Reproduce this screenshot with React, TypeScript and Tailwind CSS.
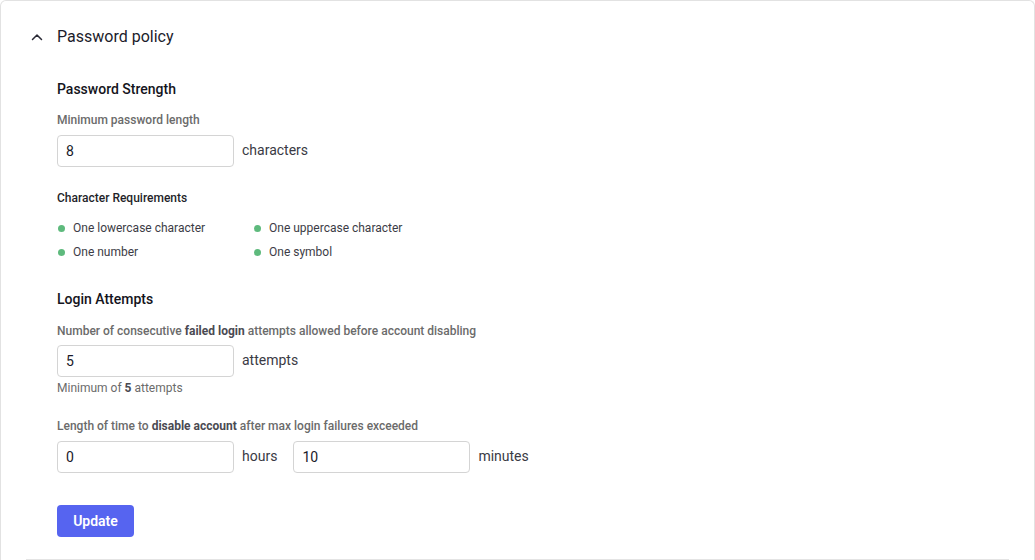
import React from 'react';

const reqs = [
  'One lowercase character',
  'One uppercase character',
  'One number',
  'One symbol',
];

function NumberInput({ value }: { value: string }) {
  return (
    <input
      type="text"
      defaultValue={value}
      className="w-[177px] h-[32px] rounded-[4px] border border-[#d4d4d4] bg-white px-[8px] pb-[1px] text-[14px] text-[#1a1a2a] outline-none"
    />
  );
}

export default function App() {
  return (
    <div className="min-h-[560px] w-[1035px] bg-white font-['Roboto',sans-serif]">
      <div className="h-[560px] rounded-t-[6px] border border-b-0 border-[#e2e2e2] bg-white">
        {/* Accordion header */}
        <div className="flex h-[71px] items-center pl-[30px]">
          <svg width="12" height="8" viewBox="0 0 12 8" fill="none" className="text-[#2a2a35]">
            <polyline points="1.5,6.5 6,2 10.5,6.5" stroke="currentColor" strokeWidth="1.5" strokeLinecap="round" strokeLinejoin="round" />
          </svg>
          <span className="ml-[14px] text-[16px] leading-6 text-[#1c1c2b]">Password policy</span>
        </div>

        {/* Body */}
        <div className="mx-[25px] border-b border-[#e4e4e4] pb-[22px] pl-[31px]">
          <h3 className="mt-[7px] text-[14px] font-medium leading-5 text-[#141420]">Password Strength</h3>
          <p className="mt-[13px] text-[12px] font-medium leading-4 text-[#6b6b6b]">Minimum password length</p>
          <div className="mt-[7px] flex items-center">
            <NumberInput value="8" />
            <span className="ml-2 pb-[1px] text-[14px] text-[#3a3a44]">characters</span>
          </div>

          <p className="mt-[23px] text-[12px] font-medium leading-4 text-[#1f1f2a]">Character Requirements</p>
          <ul className="mt-[14px] grid w-[390px] grid-cols-[196px_1fr] gap-y-2">
            {reqs.map((r) => (
              <li key={r} className="flex h-4 items-center text-[12px] text-[#3c3c46]">
                <span className="ml-[1px] mr-[8px] inline-block h-[7px] w-[7px] rounded-full bg-[#5eba7d]" />
                {r}
              </li>
            ))}
          </ul>

          <h3 className="mt-[29px] text-[14px] font-medium leading-5 text-[#141420]">Login Attempts</h3>
          <p className="mt-[14px] text-[12px] font-medium leading-4 text-[#6b6b6b]">
            Number of consecutive <span className="font-bold text-[#4a4a52]">failed login</span> attempts allowed before account disabling
          </p>
          <div className="mt-[6px] flex items-center">
            <NumberInput value="5" />
            <span className="ml-2 pb-[1px] text-[14px] text-[#3a3a44]">attempts</span>
          </div>
          <p className="mt-[3px] text-[12px] leading-4 text-[#6b6b6b]">
            Minimum of <span className="font-bold text-[#4a4a52]">5</span> attempts
          </p>

          <p className="mt-[22px] text-[12px] font-medium leading-4 text-[#6b6b6b]">
            Length of time to <span className="font-bold text-[#4a4a52]">disable account</span> after max login failures exceeded
          </p>
          <div className="mt-[7px] flex items-center">
            <NumberInput value="0" />
            <span className="ml-2 pb-[1px] text-[14px] text-[#3a3a44]">hours</span>
            <div className="ml-[16px]">
              <NumberInput value="10" />
            </div>
            <span className="ml-2 pb-[1px] text-[14px] text-[#3a3a44]">minutes</span>
          </div>

          <button className="mt-8 h-[32px] w-[77px] rounded-[4px] bg-[#5664f0] text-[14px] font-semibold text-white">
            Update
          </button>
        </div>
      </div>
    </div>
  );
}
